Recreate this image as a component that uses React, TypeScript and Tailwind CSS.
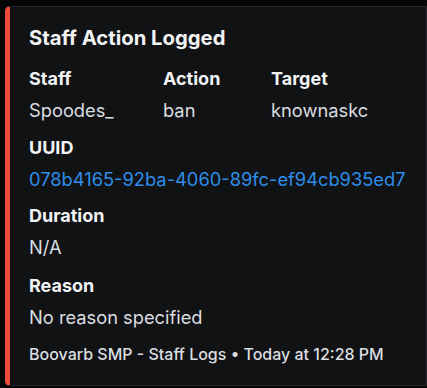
import React from 'react'

const fields = [
  { name: 'Staff', value: 'Spoodes_' },
  { name: 'Action', value: 'ban' },
  { name: 'Target', value: 'knownaskc' },
]

function Field({ name, children, className = '' }: { name: string; children: React.ReactNode; className?: string }) {
  return (
    <div className={className}>
      <div className="text-[18px] leading-[24px] font-bold text-[#f2f3f5]">{name}</div>
      <div className="mt-[7px] text-[18.3px] leading-[24px] text-[#dbdee1]">{children}</div>
    </div>
  )
}

export default function App() {
  return (
    <div
      className="min-h-[388px] w-[427px] bg-[#050506] pt-[6px] pl-[5px] pb-[2px]"
      style={{ fontFamily: 'Inter, "Noto Sans", sans-serif' }}
    >
      <div className="h-[380px] rounded-l-[5px] border border-l-[5px] border-[#24252a] border-l-[#ef4b3a] bg-[#111214] pl-[19px] pt-[18px]">
        <div className="text-[20.3px] leading-[26px] font-bold text-[#f2f3f5]">Staff Action Logged</div>

        <div className="mt-[16px] grid grid-cols-[134px_108px_auto]">
          {fields.map(f => (
            <Field key={f.name} name={f.name}>{f.value}</Field>
          ))}
        </div>

        <Field name="UUID" className="mt-[14px]">
          <span className="text-[#2e8de8]">078b4165-92ba-4060-89fc-ef94cb935ed7</span>
        </Field>

        <Field name="Duration" className="mt-[13px]">N/A</Field>

        <Field name="Reason" className="mt-[15px]">No reason specified</Field>

        <div className="mt-[15px] text-[16px] leading-[20px] font-medium text-[#dbdee1]">
          Boovarb SMP - Staff Logs • Today at 12:28 PM
        </div>
      </div>
    </div>
  )
}
